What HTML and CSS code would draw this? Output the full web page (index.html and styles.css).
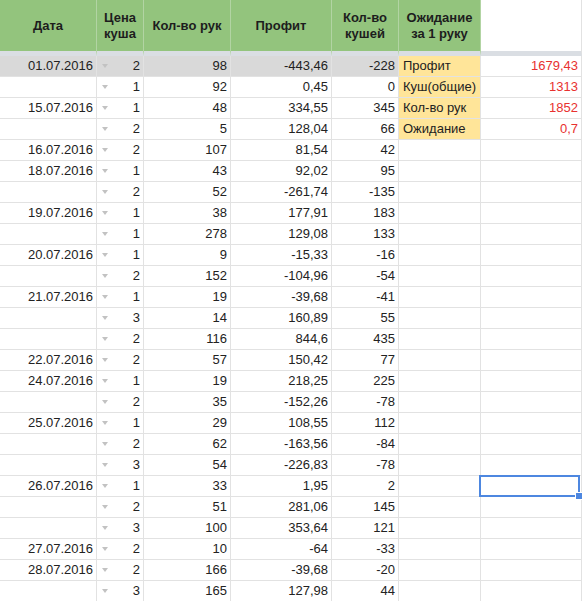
FILE: index.html
```html
<!DOCTYPE html>
<html lang="ru">
<head>
<meta charset="utf-8">
<link rel="stylesheet" href="styles.css">
</head>
<body>
<div class="sheet">
  <div class="h"><span>Дата</span></div>
  <div class="h"><span>Цена<br>куша</span></div>
  <div class="h"><span>Кол-во рук</span></div>
  <div class="h"><span>Профит</span></div>
  <div class="h"><span>Кол-во<br>кушей</span></div>
  <div class="h"><span>Ожидание<br>за 1 руку</span></div>
  <div class="h blank"></div>

  <div class="c r g">01.07.2016</div><div class="c dd g"><i></i>2</div><div class="c r g">98</div><div class="c r g">-443,46</div><div class="c r g">-228</div><div class="c lab">Профит</div><div class="c r red">1679,43</div>
  <div class="c r"></div><div class="c dd"><i></i>1</div><div class="c r">92</div><div class="c r">0,45</div><div class="c r">0</div><div class="c lab">Куш(общие)</div><div class="c r red">1313</div>
  <div class="c r">15.07.2016</div><div class="c dd"><i></i>1</div><div class="c r">48</div><div class="c r">334,55</div><div class="c r">345</div><div class="c lab">Кол-во рук</div><div class="c r red">1852</div>
  <div class="c r"></div><div class="c dd"><i></i>2</div><div class="c r">5</div><div class="c r">128,04</div><div class="c r">66</div><div class="c lab">Ожидание</div><div class="c r red">0,7</div>
  <div class="c r">16.07.2016</div><div class="c dd"><i></i>2</div><div class="c r">107</div><div class="c r">81,54</div><div class="c r">42</div><div class="c"></div><div class="c"></div>
  <div class="c r">18.07.2016</div><div class="c dd"><i></i>1</div><div class="c r">43</div><div class="c r">92,02</div><div class="c r">95</div><div class="c"></div><div class="c"></div>
  <div class="c r"></div><div class="c dd"><i></i>2</div><div class="c r">52</div><div class="c r">-261,74</div><div class="c r">-135</div><div class="c"></div><div class="c"></div>
  <div class="c r">19.07.2016</div><div class="c dd"><i></i>1</div><div class="c r">38</div><div class="c r">177,91</div><div class="c r">183</div><div class="c"></div><div class="c"></div>
  <div class="c r"></div><div class="c dd"><i></i>1</div><div class="c r">278</div><div class="c r">129,08</div><div class="c r">133</div><div class="c"></div><div class="c"></div>
  <div class="c r">20.07.2016</div><div class="c dd"><i></i>1</div><div class="c r">9</div><div class="c r">-15,33</div><div class="c r">-16</div><div class="c"></div><div class="c"></div>
  <div class="c r"></div><div class="c dd"><i></i>2</div><div class="c r">152</div><div class="c r">-104,96</div><div class="c r">-54</div><div class="c"></div><div class="c"></div>
  <div class="c r">21.07.2016</div><div class="c dd"><i></i>1</div><div class="c r">19</div><div class="c r">-39,68</div><div class="c r">-41</div><div class="c"></div><div class="c"></div>
  <div class="c r"></div><div class="c dd"><i></i>3</div><div class="c r">14</div><div class="c r">160,89</div><div class="c r">55</div><div class="c"></div><div class="c"></div>
  <div class="c r"></div><div class="c dd"><i></i>2</div><div class="c r">116</div><div class="c r">844,6</div><div class="c r">435</div><div class="c"></div><div class="c"></div>
  <div class="c r">22.07.2016</div><div class="c dd"><i></i>2</div><div class="c r">57</div><div class="c r">150,42</div><div class="c r">77</div><div class="c"></div><div class="c"></div>
  <div class="c r">24.07.2016</div><div class="c dd"><i></i>1</div><div class="c r">19</div><div class="c r">218,25</div><div class="c r">225</div><div class="c"></div><div class="c"></div>
  <div class="c r"></div><div class="c dd"><i></i>2</div><div class="c r">35</div><div class="c r">-152,26</div><div class="c r">-78</div><div class="c"></div><div class="c"></div>
  <div class="c r">25.07.2016</div><div class="c dd"><i></i>1</div><div class="c r">29</div><div class="c r">108,55</div><div class="c r">112</div><div class="c"></div><div class="c"></div>
  <div class="c r"></div><div class="c dd"><i></i>2</div><div class="c r">62</div><div class="c r">-163,56</div><div class="c r">-84</div><div class="c"></div><div class="c"></div>
  <div class="c r"></div><div class="c dd"><i></i>3</div><div class="c r">54</div><div class="c r">-226,83</div><div class="c r">-78</div><div class="c"></div><div class="c"></div>
  <div class="c r">26.07.2016</div><div class="c dd"><i></i>1</div><div class="c r">33</div><div class="c r">1,95</div><div class="c r">2</div><div class="c"></div><div class="c sel"><b class="selbox"><em class="handle"></em></b></div>
  <div class="c r"></div><div class="c dd"><i></i>2</div><div class="c r">51</div><div class="c r">281,06</div><div class="c r">145</div><div class="c"></div><div class="c"></div>
  <div class="c r"></div><div class="c dd"><i></i>3</div><div class="c r">100</div><div class="c r">353,64</div><div class="c r">121</div><div class="c"></div><div class="c"></div>
  <div class="c r">27.07.2016</div><div class="c dd"><i></i>2</div><div class="c r">10</div><div class="c r">-64</div><div class="c r">-33</div><div class="c"></div><div class="c"></div>
  <div class="c r">28.07.2016</div><div class="c dd"><i></i>2</div><div class="c r">166</div><div class="c r">-39,68</div><div class="c r">-20</div><div class="c"></div><div class="c"></div>
  <div class="c r"></div><div class="c dd"><i></i>3</div><div class="c r">165</div><div class="c r">127,98</div><div class="c r">44</div><div class="c"></div><div class="c"></div>
</div>
</body>
</html>
```
FILE: styles.css
```css
html, body {
  margin: 0;
  padding: 0;
  background: #fff;
  overflow: hidden;
}
.sheet {
  display: grid;
  grid-template-columns: 97px 47px 87px 101px 67px 82px 101px;
  grid-auto-rows: 21px;
  grid-template-rows: 56px;
  font-family: "Liberation Sans", Arial, sans-serif;
  font-size: 13px;
  color: #222;
  width: 582px;
}
.h {
  box-sizing: border-box;
  background: #93c47d;
  border-right: 1px solid #b2d4a3;
  border-bottom: 5px solid #dadee3;
  display: flex;
  align-items: center;
  justify-content: center;
  text-align: center;
  font-weight: bold;
  line-height: 16px;
  color: #1d1d1d;
}
.h.blank {
  background: #fff;
  border-right: 1px solid #e2e2e2;
}
.c {
  box-sizing: border-box;
  border-right: 1px solid #e2e2e2;
  border-bottom: 1px solid #e2e2e2;
  line-height: 20px;
  padding: 0 3px;
  white-space: nowrap;
  overflow: visible;
}
.r { text-align: right; }
.g { background: #d9d9d9; }
.dd {
  display: flex;
  align-items: center;
  justify-content: space-between;
  padding-left: 5px;
}
.dd i {
  display: block;
  width: 0;
  height: 0;
  border-left: 3px solid transparent;
  border-right: 3px solid transparent;
  border-top: 4px solid #c2c2c2;
}
.lab {
  background: #ffe599;
  padding-left: 4px;
}
.red { color: #e8312f; }
.sel { position: relative; }
.selbox {
  position: absolute;
  left: -2px;
  top: -1px;
  right: 1px;
  bottom: -1px;
  border: 2px solid #4d87e0;
}
.handle {
  position: absolute;
  right: -5px;
  bottom: -5px;
  width: 6px;
  height: 6px;
  background: #4d87e0;
  border: 1px solid #fff;
}
```
